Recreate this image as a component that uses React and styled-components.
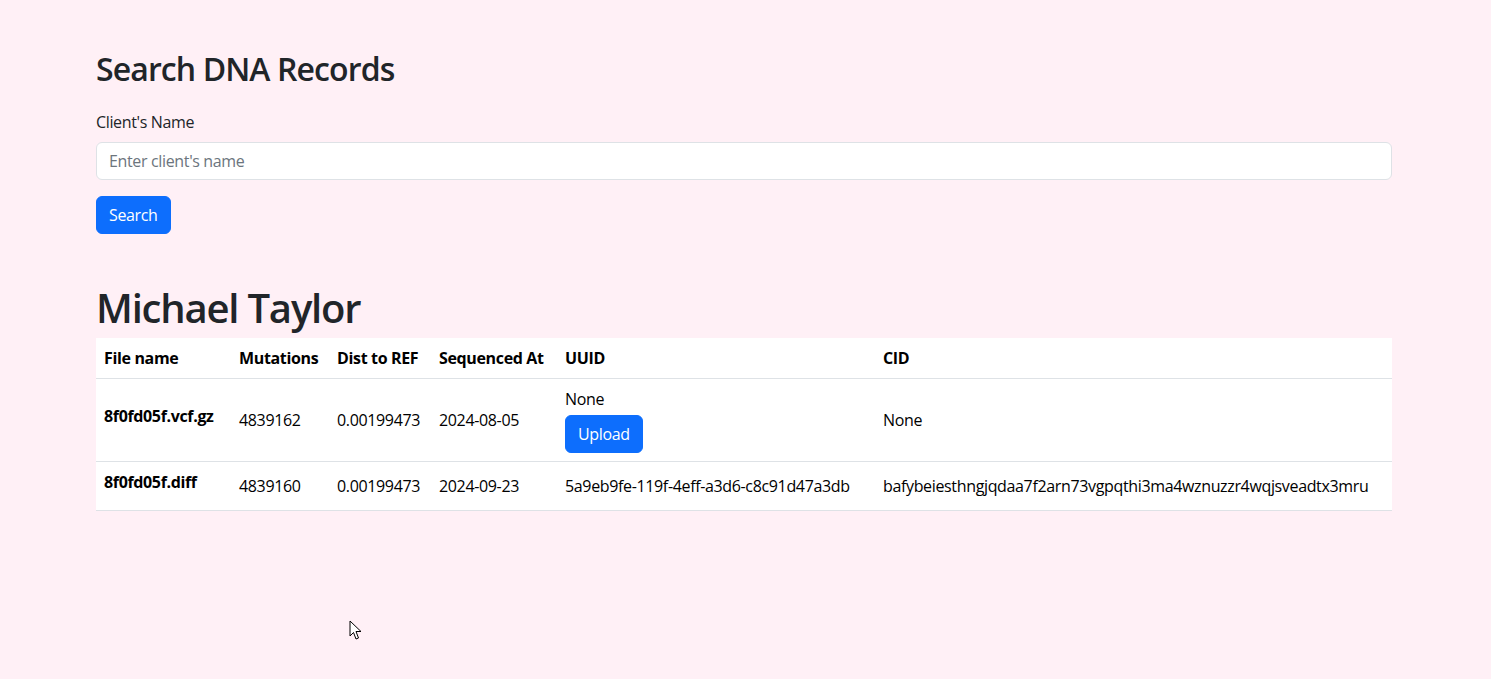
import React from "react";
import styled, { createGlobalStyle } from "styled-components";

const Global = createGlobalStyle`
  html, body { margin: 0; padding: 0; }
  body {
    background: #fff0f6;
    font-family: "Segoe UI", "Open Sans", "Noto Sans", sans-serif;
    font-size: 16px;
    line-height: 1.5;
    letter-spacing: -0.35px;
    color: #212529;
  }
  * { box-sizing: border-box; }
`;

const Page = styled.main`
  position: relative;
  min-height: 679px;
  padding: 50px 0 0 96px;
`;

const Container = styled.div`
  width: 1296px;
`;

const Title = styled.h2`
  margin: 0 0 22px;
  font-size: 32px;
  font-weight: 600;
  line-height: 1.2;
  letter-spacing: -0.9px;
`;

const Field = styled.div`
  margin-bottom: 16px;
`;

const Label = styled.label`
  display: block;
  margin-bottom: 8px;
`;

const Input = styled.input`
  display: block;
  width: 100%;
  height: 38px;
  padding: 6px 12px;
  font: inherit;
  letter-spacing: inherit;
  color: #212529;
  background: #fff;
  border: 1px solid #dee2e6;
  border-radius: 6px;
  outline: none;
  &::placeholder { color: #6c757d; opacity: 1; }
`;

const Button = styled.button`
  display: inline-block;
  height: 38px;
  padding: 6px 12px;
  margin-top: ${(p) => p.$mt || 0}px;
  font: inherit;
  letter-spacing: inherit;
  color: #fff;
  background: #0d6efd;
  border: 1px solid #0d6efd;
  border-radius: 6px;
  cursor: pointer;
`;

const Name = styled.h1`
  margin: 50px 0 6px;
  font-size: 40px;
  font-weight: 600;
  line-height: 1.2;
  letter-spacing: -1.2px;
`;

const Table = styled.table`
  width: 100%;
  border-collapse: collapse;
  table-layout: fixed;
  background: #fff;
  color: #000;
`;

const Th = styled.th`
  width: ${(p) => p.$w}px;
  padding: 8px;
  text-align: left;
  font-weight: 700;
  vertical-align: bottom;
  border-bottom: 1px solid #dee2e6;
`;

const Row = styled.tr`
  height: ${(p) => p.$h}px;
`;

const Td = styled.td`
  padding: 8px;
  vertical-align: middle;
  border-bottom: 1px solid #dee2e6;
`;

const FileName = styled.h6`
  margin: 0 0 8px;
  font-size: 16px;
  font-weight: 700;
  line-height: 1.2;
`;

const Cursor = styled.svg`
  position: absolute;
  left: 349px;
  top: 620px;
`;

const cols = [
  ["File name", 135],
  ["Mutations", 98],
  ["Dist to REF", 102],
  ["Sequenced At", 126],
  ["UUID", 318],
  ["CID", 517],
];

export default function App() {
  return (
    <>
      <Global />
      <Page>
        <Container>
          <Title>Search DNA Records</Title>
          <Field>
            <Label htmlFor="client">Client's Name</Label>
            <Input id="client" placeholder="Enter client's name" />
          </Field>
          <Button>Search</Button>

          <Name>Michael Taylor</Name>
          <Table>
            <thead>
              <tr>
                {cols.map(([t, w]) => (
                  <Th key={t} $w={w}>{t}</Th>
                ))}
              </tr>
            </thead>
            <tbody>
              <Row $h={83}>
                <Td><FileName>8f0fd05f.vcf.gz</FileName></Td>
                <Td>4839162</Td>
                <Td>0.00199473</Td>
                <Td>2024-08-05</Td>
                <Td>
                  <div>None</div>
                  <Button $mt={4}>Upload</Button>
                </Td>
                <Td>None</Td>
              </Row>
              <Row $h={49}>
                <Td><FileName>8f0fd05f.diff</FileName></Td>
                <Td>4839160</Td>
                <Td>0.00199473</Td>
                <Td>2024-09-23</Td>
                <Td>5a9eb9fe-119f-4eff-a3d6-c8c91d47a3db</Td>
                <Td>bafybeiesthngjqdaa7f2arn73vgpqthi3ma4wznuzzr4wqjsveadtx3mru</Td>
              </Row>
            </tbody>
          </Table>
        </Container>
        <Cursor width="13" height="21" viewBox="0 0 13 21">
          <path d="M1 1 L1 16 L4.5 12.5 L7 19 L9.5 18 L7 11.5 L12 11.5 Z" fill="#fff" stroke="#000" strokeWidth="1" strokeLinejoin="round" />
        </Cursor>
      </Page>
    </>
  );
}
